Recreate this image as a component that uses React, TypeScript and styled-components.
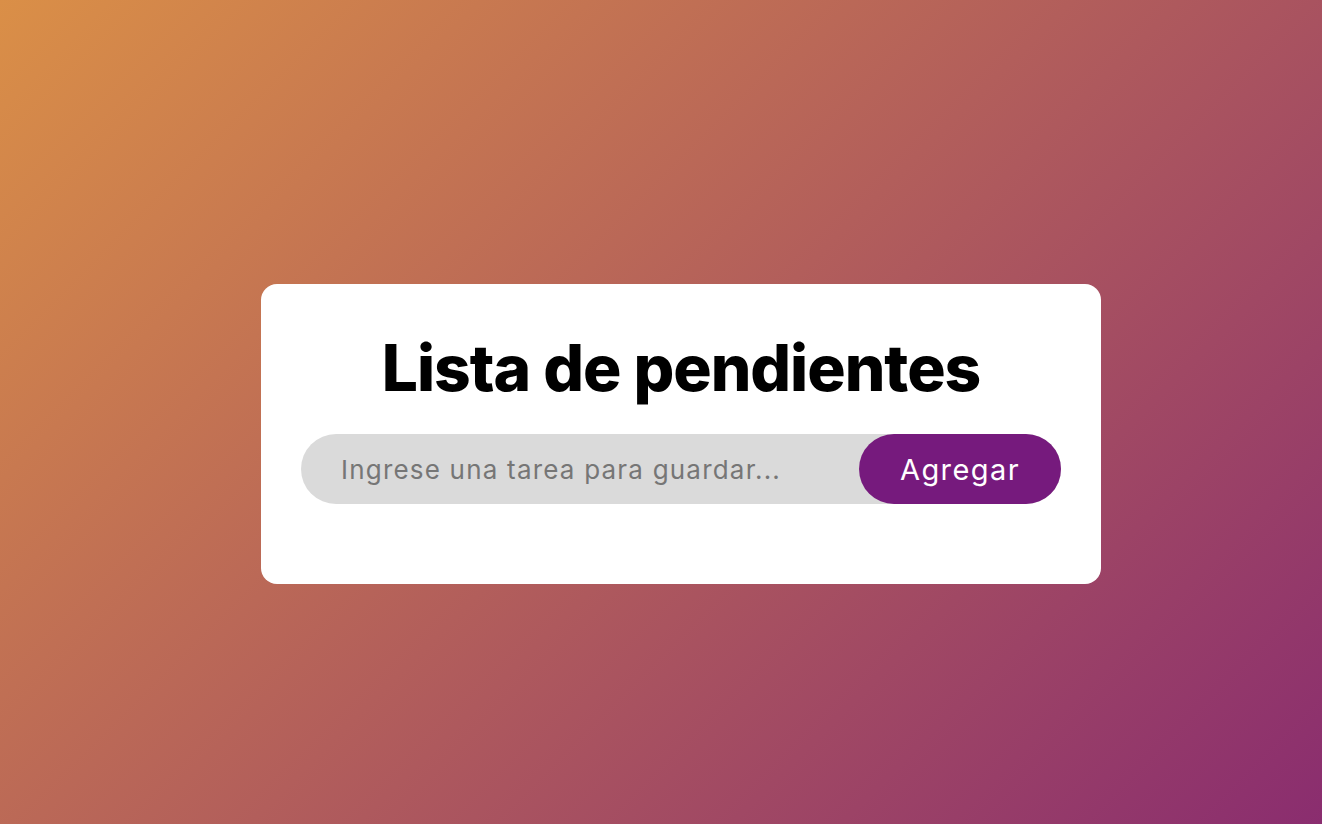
import React from "react";
import styled, { createGlobalStyle } from "styled-components";

const GlobalStyle = createGlobalStyle`
  * { box-sizing: border-box; margin: 0; padding: 0; }
  body { margin: 0; font-family: Inter, "Noto Sans", sans-serif; }
`;

const Page = styled.div`
  width: 100%;
  min-height: 100vh;
  background: linear-gradient(135deg, #da8f47, #8a2d6f);
  display: flex;
  align-items: center;
  justify-content: center;
  padding: 44px 0 0 40px;
`;

const Card = styled.div`
  width: 840px;
  height: 300px;
  background: #fff;
  border-radius: 16px;
  padding: 49px 40px 40px;
  display: flex;
  flex-direction: column;
  align-items: center;
`;

const Title = styled.h1`
  font-family: Inter, "Noto Sans", sans-serif;
  font-weight: 800;
  font-size: 64px;
  line-height: 70px;
  letter-spacing: -1px;
  color: #000;
  margin-bottom: 31px;
`;

const Row = styled.div`
  width: 100%;
  height: 70px;
  display: flex;
  align-items: center;
  background: #dadada;
  border-radius: 35px;
`;

const Input = styled.input`
  flex: 1;
  height: 100%;
  border: none;
  outline: none;
  background: transparent;
  padding-left: 40px;
  font-family: Inter, "Noto Sans", sans-serif;
  font-size: 26px;
  letter-spacing: 1.2px;
  color: #333;
  &::placeholder { color: #767676; }
`;

const Button = styled.button`
  height: 70px;
  width: 202px;
  border: none;
  border-radius: 35px;
  background: #761a7d;
  color: #fff;
  font-family: Inter, "Noto Sans", sans-serif;
  font-size: 29px;
  letter-spacing: 1.4px;
  cursor: pointer;
`;

export default function App() {
  return (
    <>
      <GlobalStyle />
      <Page>
        <Card>
          <Title>Lista de pendientes</Title>
          <Row>
            <Input placeholder="Ingrese una tarea para guardar..." />
            <Button>Agregar</Button>
          </Row>
        </Card>
      </Page>
    </>
  );
}
